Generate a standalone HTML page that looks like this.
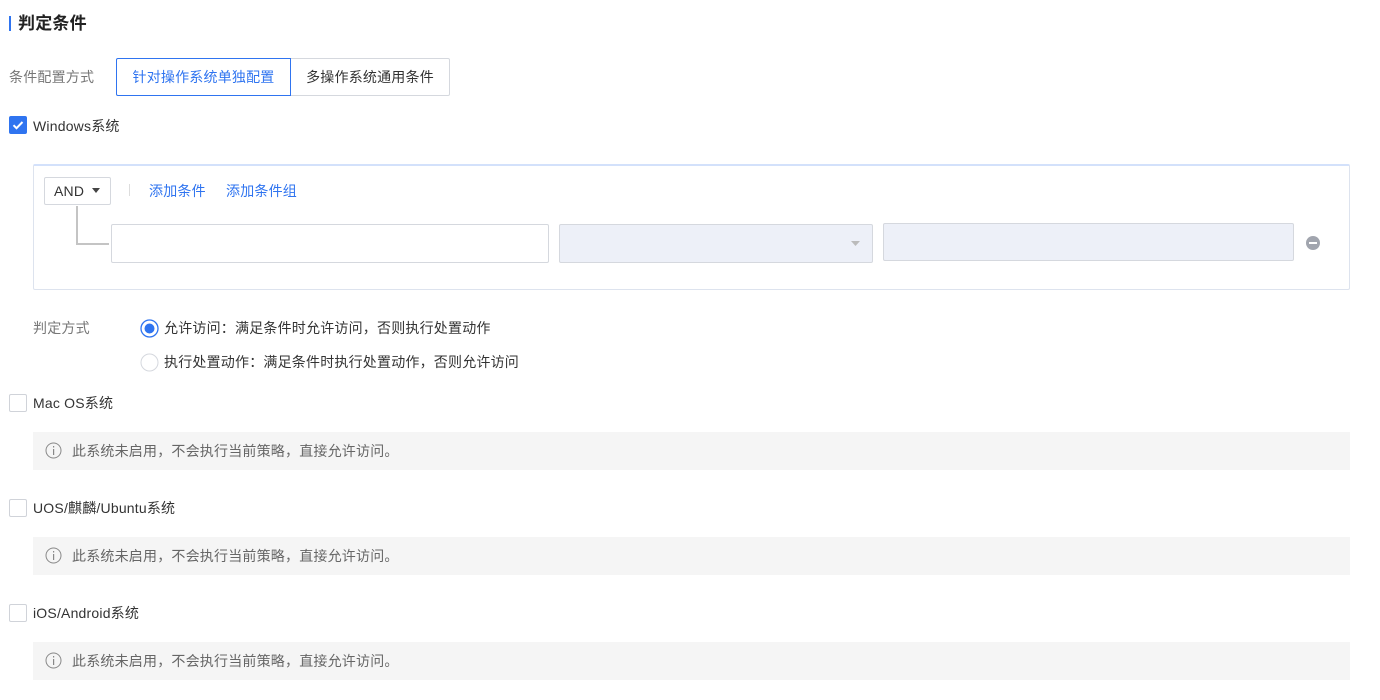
<!DOCTYPE html>
<html><head><meta charset="utf-8"><style>
*{box-sizing:border-box;margin:0;padding:0}
body{width:1380px;height:700px;background:#fff;position:relative;overflow:hidden;font-family:"Liberation Sans","Noto Sans CJK SC",sans-serif;font-size:14px;letter-spacing:0.2px;color:#333}
.a{position:absolute;white-space:nowrap}
.t{line-height:20px}
.cb{position:absolute;left:9px;width:18px;height:18px;border:1px solid #d0d3d9;border-radius:2px;background:#fff}
.info{position:absolute;left:33px;width:1317px;height:38px;background:#f5f5f5;color:#666}
.info svg{position:absolute;left:12px;top:10px}
.info span{position:absolute;left:39px;top:9px;line-height:20px}
.blue{color:#2f74f0}
</style></head><body>
<div class="a" style="left:9px;top:16px;width:2px;height:15px;background:#2f74f0"></div>
<div class="a" style="left:18px;top:13px;font-size:17px;font-weight:bold;color:#222;line-height:21px">判定条件</div>

<div class="a t" style="left:9px;top:67px;color:#777">条件配置方式</div>
<div class="a" style="left:116px;top:58px;width:175px;height:38px;border:1px solid #2f74f0;border-radius:2px 0 0 2px;z-index:2;color:#2f74f0;text-align:center;line-height:37px">针对操作系统单独配置</div>
<div class="a" style="left:290px;top:58px;width:160px;height:38px;border:1px solid #d5d8de;border-radius:0 2px 2px 0;color:#333;text-align:center;line-height:37px">多操作系统通用条件</div>

<div class="cb" style="top:116px;background:#2f74f0;border-color:#2f74f0"><svg width="16" height="16" viewBox="0 0 16 16" style="position:absolute;left:0;top:0"><path d="M3.5 8.2l3 3 6-6.2" stroke="#fff" stroke-width="2" fill="none"/></svg></div>
<div class="a t" style="left:33px;top:116px">Windows系统</div>

<div class="a" style="left:33px;top:164px;width:1317px;height:126px;border:1px solid #dde3ee;border-top:2px solid #d3e1fb;border-radius:2px"></div>
<div class="a" style="left:44px;top:177px;width:67px;height:28px;border:1px solid #d5d8de;border-radius:2px;background:#fff"><span class="a" style="left:9px;top:4px;line-height:18px;color:#333">AND</span><svg class="a" style="left:47px;top:10px" width="8" height="6"><path d="M0 0h8L4 5z" fill="#444"/></svg></div>
<div class="a" style="left:129px;top:184px;width:1px;height:12px;background:#ddd"></div>
<div class="a t blue" style="left:149px;top:181px">添加条件</div>
<div class="a t blue" style="left:226px;top:181px">添加条件组</div>
<div class="a" style="left:76px;top:206px;width:2px;height:39px;background:#c4c4c4"></div>
<div class="a" style="left:76px;top:243px;width:33px;height:2px;background:#c4c4c4"></div>
<div class="a" style="left:111px;top:224px;width:438px;height:39px;border:1px solid #d5d8de;border-radius:2px"></div>
<div class="a" style="left:559px;top:224px;width:314px;height:39px;border:1px solid #d5d8de;border-radius:2px;background:#edf0f8"><svg class="a" style="left:291px;top:16px" width="9" height="6"><path d="M0 0h9L4.5 5z" fill="#bbb"/></svg></div>
<div class="a" style="left:883px;top:223px;width:411px;height:38px;border:1px solid #d5d8de;border-radius:2px;background:#edf0f8"></div>
<svg class="a" style="left:1306px;top:236px" width="14" height="14"><circle cx="7" cy="7" r="7" fill="#a1a5ae"/><rect x="3" y="6" width="8" height="2" fill="#fff"/></svg>

<div class="a t" style="left:33px;top:318px;color:#777">判定方式</div>
<svg class="a" style="left:140px;top:319px" width="19" height="19"><circle cx="9.5" cy="9.5" r="8.5" fill="#fff" stroke="#2f74f0" stroke-width="1.3"/><circle cx="9.5" cy="9.5" r="5" fill="#2f74f0"/></svg>
<div class="a t" style="left:164px;top:318px">允许访问：满足条件时允许访问，否则执行处置动作</div>
<svg class="a" style="left:140px;top:353px" width="19" height="19"><circle cx="9.5" cy="9.5" r="8.5" fill="#fff" stroke="#d5d8de" stroke-width="1"/></svg>
<div class="a t" style="left:164px;top:352px">执行处置动作：满足条件时执行处置动作，否则允许访问</div>

<div class="cb" style="top:394px"></div>
<div class="a t" style="left:33px;top:393px">Mac OS系统</div>
<div class="info" style="top:432px"><svg width="17" height="17"><circle cx="8.5" cy="8.5" r="7.5" fill="none" stroke="#888" stroke-width="1"/><rect x="8" y="4" width="1.2" height="1.5" fill="#888"/><rect x="8" y="7" width="1.2" height="6" fill="#888"/></svg><span>此系统未启用，不会执行当前策略，直接允许访问。</span></div>

<div class="cb" style="top:499px"></div>
<div class="a t" style="left:33px;top:498px">UOS/麒麟/Ubuntu系统</div>
<div class="info" style="top:537px"><svg width="17" height="17"><circle cx="8.5" cy="8.5" r="7.5" fill="none" stroke="#888" stroke-width="1"/><rect x="8" y="4" width="1.2" height="1.5" fill="#888"/><rect x="8" y="7" width="1.2" height="6" fill="#888"/></svg><span>此系统未启用，不会执行当前策略，直接允许访问。</span></div>

<div class="cb" style="top:604px"></div>
<div class="a t" style="left:33px;top:603px">iOS/Android系统</div>
<div class="info" style="top:642px"><svg width="17" height="17"><circle cx="8.5" cy="8.5" r="7.5" fill="none" stroke="#888" stroke-width="1"/><rect x="8" y="4" width="1.2" height="1.5" fill="#888"/><rect x="8" y="7" width="1.2" height="6" fill="#888"/></svg><span>此系统未启用，不会执行当前策略，直接允许访问。</span></div>
</body></html>
